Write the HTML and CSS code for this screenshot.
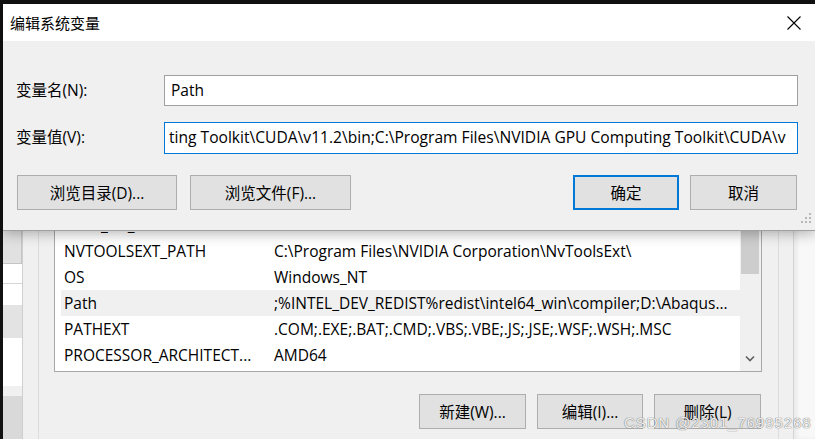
FILE: index.html
```html
<!DOCTYPE html>
<html lang="zh-CN">
<head>
<meta charset="UTF-8" />
<title>编辑系统变量</title>
<link rel="stylesheet" href="styles.css">
</head>
<body>

<div id="desktop">

  <!-- Environment variables window behind -->
  <div id="back-window">
    <div class="side-strips">
      <div class="strip s1"></div>
      <div class="strip s2"></div>
      <div class="strip s3"></div>
      <div class="strip s4"></div>
      <div class="strip s5"></div>
      <div class="strip s6"></div>
      <div class="strip s7"></div>
      <div class="strip s8"></div>
    </div>
    <div class="gutter g1"></div>
    <div class="gutter g2"></div>

    <div class="main">
      <div class="var-list">
        <div class="rows">
          <!-- row mostly hidden under the dialog, only the underscores peek out -->
          <div class="row ghost"><span class="name">NUM<u>_</u>OF<u>_</u>PROCESSORS</span></div>
          <div class="row"><span class="name">NVTOOLSEXT_PATH</span><span class="val">C:\Program Files\NVIDIA Corporation\NvToolsExt\</span></div>
          <div class="row"><span class="name">OS</span><span class="val">Windows_NT</span></div>
          <div class="row selected"><span class="name">Path</span><span class="val">;%INTEL_DEV_REDIST%redist\intel64_win\compiler;D:\Abaqus...</span></div>
          <div class="row"><span class="name">PATHEXT</span><span class="val">.COM;.EXE;.BAT;.CMD;.VBS;.VBE;.JS;.JSE;.WSF;.WSH;.MSC</span></div>
          <div class="row"><span class="name">PROCESSOR_ARCHITECT...</span><span class="val">AMD64</span></div>
        </div>
        <div class="scrollbar">
          <div class="thumb"></div>
          <svg class="arrow" width="10" height="7" viewBox="0 0 10 7">
            <path d="M1 1.5 L5 5.5 L9 1.5" fill="none" stroke="#606060" stroke-width="1.6"/>
          </svg>
        </div>
      </div>
      <div class="list-buttons">
        <button class="btn w107">新建(W)...</button>
        <button class="btn w106">编辑(I)...</button>
        <button class="btn w107">删除(L)</button>
      </div>
    </div>

    <div class="gutter g3"></div>
    <div class="gutter g4"></div>
    <div class="outside"></div>
  </div>

  <!-- Edit system variable dialog -->
  <div id="edit-dialog">
    <div class="title-bar">
      <span class="title">编辑系统变量</span>
      <svg class="close" width="14" height="14" viewBox="0 0 14 14">
        <path d="M0.5 0.5 L13.5 13.5 M13.5 0.5 L0.5 13.5" stroke="#000" stroke-width="1.1"/>
      </svg>
    </div>
    <div class="dialog-body">
      <div class="field">
        <label>变量名(N):</label>
        <div class="input">Path</div>
      </div>
      <div class="field">
        <label>变量值(V):</label>
        <div class="input focused">ting Toolkit\CUDA\v11.2\bin;C:\Program Files\NVIDIA GPU Computing Toolkit\CUDA\v</div>
      </div>
      <div class="dialog-buttons">
        <div class="left-group">
          <button class="btn browse-dir">浏览目录(D)...</button>
          <button class="btn browse-file">浏览文件(F)...</button>
        </div>
        <div class="right-group">
          <button class="btn w106 default">确定</button>
          <button class="btn w107">取消</button>
        </div>
      </div>
      <svg class="grip" width="12" height="12" viewBox="0 0 12 12">
        <rect x="9" y="1" width="2" height="2" fill="#b8b8b8"/>
        <rect x="5" y="5" width="2" height="2" fill="#b8b8b8"/>
        <rect x="9" y="5" width="2" height="2" fill="#b8b8b8"/>
        <rect x="1" y="9" width="2" height="2" fill="#b8b8b8"/>
        <rect x="5" y="9" width="2" height="2" fill="#b8b8b8"/>
        <rect x="9" y="9" width="2" height="2" fill="#b8b8b8"/>
      </svg>
    </div>
  </div>

  <div class="watermark">CSDN @2301_76995268</div>
</div>

</body>
</html>
```

FILE: styles.css
```css
body {
  margin: 0;
  background: #111;
  font-family: "Open Sans", "Noto Sans CJK SC", sans-serif;
  font-size: 15.5px;
  color: #000;
}

#desktop {
  position: relative;
  width: 815px;
  height: 439px;
  padding: 4px 0 0 3px;
  box-sizing: border-box;
  overflow: hidden;
}

/* Window behind the dialog */
#back-window {
  display: flex;
  height: 435px;
  background: #f0f0f0;
}

.side-strips {
  width: 19px;
  display: flex;
  flex-direction: column;
  border-right: 1px solid #cfcfcf;
}
.strip { flex: none; }
.s1 { height: 225px; background: #ececec; }
.s2 { height: 33px; background: #e1e1e1; border: 1px solid #c4c4c4; border-left: none; }
.s3 { height: 19px; background: #fff; border-bottom: 1px solid #d6d6d6; }
.s4 { height: 21px; background: #fff; }
.s5 { height: 33px; background: #e3e3e3; }
.s6 { height: 48px; background: #fff; }
.s7 { height: 10px; background: #f0f0f0; }
.s8 { flex: 1; background: #d9d9d9; }

.gutter { flex: none; }
.g1 { width: 15px; border-right: 1px solid #dcdcdc; }
.g2 { width: 15px; }
.g3 { width: 16px; border-right: 1px solid #dcdcdc; }
.g4 { width: 14px; border-right: 1px solid #d4d4d4; }
.outside {
  flex: 1;
  background: #f8f8f8;
  box-shadow: inset 3px 0 4px rgba(0, 0, 0, 0.06);
}

.main {
  width: 708px;
  padding-top: 204px;
}

.var-list {
  display: flex;
  height: 162px;
  background: #fff;
  border: 1px solid #a8a8a8;
}
.rows {
  flex: 1;
  padding: 3px 0 0 6px;
}
.row {
  display: flex;
  align-items: center;
  height: 26px;
  padding-left: 3px;
  white-space: nowrap;
}
.row.selected { background: #f0f0f0; }
.row .name { width: 210px; flex: none; }
.row.ghost .name { color: transparent; }
.row.ghost u { color: #000; text-decoration: none; }

.scrollbar {
  width: 21px;
  position: relative;
  background: #f0f0f0;
}
.thumb {
  margin: 0 2px 0 1px;
  height: 65px;
  background: #cdcdcd;
}
.arrow {
  position: absolute;
  left: 5px;
  bottom: 9px;
}

.list-buttons {
  display: flex;
  justify-content: flex-end;
  gap: 11px;
  margin-top: 22px;
  padding-right: 1px;
}

/* Buttons */
.btn {
  height: 35px;
  background: #e1e1e1;
  border: 1px solid #adadad;
  font-family: "Open Sans", "Noto Sans CJK SC", sans-serif;
  font-size: 15.5px;
  color: #000;
  padding: 0;
}
.w106 { width: 106px; }
.w107 { width: 107px; }
.btn.default {
  border: 2px solid #0078d7;
}

/* Dialog */
#edit-dialog {
  position: absolute;
  top: 4px;
  left: 3px;
  width: 812px;
  height: 226px;
  background: #f0f0f0;
  border-bottom: 1px solid #a0a0a0;
  box-shadow: 0 3px 12px rgba(0, 0, 0, 0.28);
}

.title-bar {
  display: flex;
  justify-content: space-between;
  align-items: center;
  height: 37px;
  background: #fff;
  padding: 0 14px 0 7px;
}
.title {
  font-size: 15px;
}

.dialog-body {
  position: relative;
  padding: 34px 18px 0 13px;
}

.field {
  display: flex;
  align-items: center;
  margin-bottom: 16px;
}
.field label {
  width: 148px;
  flex: none;
  margin-top: -3px;
}
.input {
  flex: none;
  width: 634px;
  height: 31px;
  box-sizing: border-box;
  border: 1px solid #a0a0a0;
  background: #fff;
  padding: 0 6px;
  line-height: 28px;
  white-space: nowrap;
  overflow: hidden;
}
.input.focused {
  border-color: #0078d7;
  padding: 0 4px;
  height: 32px;
  font-size: 15.6px;
}

.dialog-buttons {
  display: flex;
  justify-content: space-between;
  margin-top: 21px;
  padding-left: 1px;
}
.left-group, .right-group {
  display: flex;
  gap: 13px;
}
.right-group { gap: 11px; }
.browse-dir { width: 160px; }
.browse-file { width: 161px; }

.grip {
  position: absolute;
  right: 3px;
  top: 171px;
}

.watermark {
  position: absolute;
  left: 624px;
  top: 414px;
  font-family: "Liberation Sans", sans-serif;
  font-size: 15px;
  color: rgba(255, 255, 255, 0.9);
  text-shadow: 0 0 1px #777, 0 0 1px #777;
  letter-spacing: 0.9px;
}
```
